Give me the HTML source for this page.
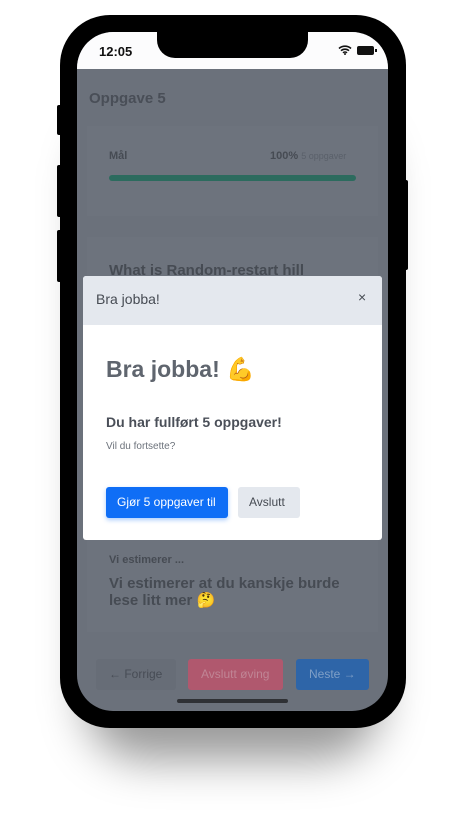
<!DOCTYPE html>
<html><head><style>
*{margin:0;padding:0;box-sizing:border-box}
body{width:465px;height:821px;background:#fff;position:relative;overflow:hidden;font-family:"Liberation Sans",sans-serif}
.shadow{position:absolute;left:85px;top:120px;width:296px;height:640px;border-radius:60px;background:rgba(0,0,0,.4);filter:blur(22px)}
.phone{position:absolute;left:60px;top:15px;width:346px;height:713px;background:#000;border-radius:50px}
.btn{position:absolute;background:#000;border-radius:2px}
.screen{position:absolute;left:77px;top:32px;width:311px;height:679px;border-radius:36px;overflow:hidden;background:#6b717b}
.status{position:absolute;left:0;top:0;width:311px;height:37px;background:#fcfcfd}
.notch{position:absolute;left:80px;top:0;width:151px;height:26px;background:#000;border-radius:0 0 18px 18px}
.t{position:absolute;white-space:nowrap}
.card{position:absolute;background:#6d737d}
.modal{position:absolute;left:83px;top:276px;width:299px;height:264px;background:#fff;border-radius:3px;overflow:hidden}
.mh{height:49px;background:#e4e8ee}
</style></head><body>
<div class="shadow"></div>
<div class="phone"></div>
<div class="btn" style="left:57px;top:105px;width:5px;height:30px"></div>
<div class="btn" style="left:57px;top:165px;width:5px;height:52px"></div>
<div class="btn" style="left:57px;top:230px;width:5px;height:52px"></div>
<div class="btn" style="left:403px;top:180px;width:5px;height:90px"></div>
<div class="screen">
 <div class="status"></div>
 <div class="notch"></div>
 <div class="t" style="left:22px;top:12px;font-size:13px;font-weight:bold;color:#111">12:05</div>
 <svg style="position:absolute;left:261px;top:13px" width="14" height="10" viewBox="0 0 14 10"><path d="M1 3.5a9 9 0 0 1 12 0M3 5.7a6 6 0 0 1 8 0M5 7.8a3 3 0 0 1 4 0" stroke="#111" stroke-width="1.6" fill="none"/><circle cx="7" cy="9" r="1" fill="#111"/></svg>
 <div style="position:absolute;left:280px;top:14px;width:17px;height:9px;border-radius:2px;background:#111"></div>
 <div style="position:absolute;left:298px;top:17px;width:1.5px;height:3px;background:#111"></div>
 <div class="t" style="left:12px;top:58px;font-size:15px;font-weight:bold;color:#494e57">Oppgave 5</div>
 <div class="card" style="left:10px;top:94px;width:291px;height:90px"></div>
 <div class="t" style="left:32px;top:118px;font-size:11px;font-weight:bold;color:#464b53">Mål</div>
 <div class="t" style="left:193px;top:118px;font-size:11px;color:#5a606a"><b style="color:#464b53">100%</b> <span style="font-size:9px">5 oppgaver</span></div>
 <div style="position:absolute;left:32px;top:143px;width:247px;height:6px;border-radius:3px;background:#2c6b5e"></div>
 <div class="card" style="left:10px;top:205px;width:291px;height:395px"></div>
 <div class="t" style="left:32px;top:230px;font-size:15px;font-weight:bold;color:#464b53">What is Random-restart hill</div>
 <div class="t" style="left:32px;top:522px;font-size:11px;font-weight:bold;color:#464b53">Vi estimerer ...</div>
 <div class="t" style="left:32px;top:543px;font-size:15px;font-weight:bold;color:#464b53;line-height:17px">Vi estimerer at du kanskje burde<br>lese litt mer 🤔</div>
 <div style="position:absolute;left:19px;top:627px;width:80px;height:31px;background:#676d77;border-radius:3px"></div>
 <div class="t" style="left:32px;top:635px;font-size:12px;color:#474c55">← Forrige</div>
 <div style="position:absolute;left:111px;top:627px;width:95px;height:31px;background:#b0586e;border-radius:3px"></div>
 <div class="t" style="left:124px;top:635px;font-size:12px;color:#c08595">Avslutt øving</div>
 <div style="position:absolute;left:219px;top:627px;width:73px;height:31px;background:#2e65a8;border-radius:3px"></div>
 <div class="t" style="left:232px;top:635px;font-size:12px;color:#7f9fc6">Neste →</div>
 <div style="position:absolute;left:100px;top:667px;width:111px;height:4px;border-radius:2px;background:#2f3135"></div>
</div>
<div class="modal">
 <div class="mh"></div>
 <div class="t" style="left:13px;top:15px;font-size:14px;color:#464b53">Bra jobba!</div>
 <div class="t" style="left:275px;top:13px;font-size:14px;color:#464b53">×</div>
 <div class="t" style="left:23px;top:80px;font-size:23px;font-weight:bold;color:#5f656e">Bra jobba! 💪</div>
 <div class="t" style="left:23px;top:138px;font-size:14px;font-weight:bold;color:#4a4f58">Du har fullført 5 oppgaver!</div>
 <div class="t" style="left:23px;top:165px;font-size:10px;color:#6c727b">Vil du fortsette?</div>
 <div style="position:absolute;left:23px;top:211px;width:122px;height:31px;background:#0f6ef6;border-radius:3px;box-shadow:0 2px 5px rgba(15,110,246,.35)"></div>
 <div class="t" style="left:34px;top:219px;font-size:12px;color:#fff">Gjør 5 oppgaver til</div>
 <div style="position:absolute;left:155px;top:211px;width:62px;height:31px;background:#e4e8ee;border-radius:3px"></div>
 <div class="t" style="left:166px;top:219px;font-size:12px;color:#464b53">Avslutt</div>
</div>
</body></html>
